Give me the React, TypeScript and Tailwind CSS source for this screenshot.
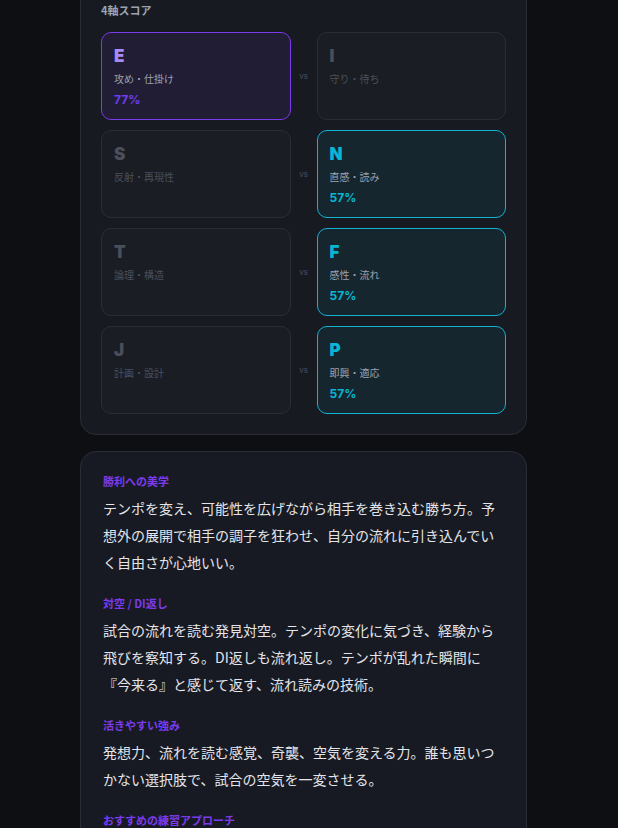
import React from "react";

type Axis = {
  letter: string;
  label: string;
  pct?: string;
  tone?: "purple" | "cyan";
};

const rows: [Axis, Axis][] = [
  [
    { letter: "E", label: "攻め・仕掛け", pct: "77%", tone: "purple" },
    { letter: "I", label: "守り・待ち" },
  ],
  [
    { letter: "S", label: "反射・再現性" },
    { letter: "N", label: "直感・読み", pct: "57%", tone: "cyan" },
  ],
  [
    { letter: "T", label: "論理・構造" },
    { letter: "F", label: "感性・流れ", pct: "57%", tone: "cyan" },
  ],
  [
    { letter: "J", label: "計画・設計" },
    { letter: "P", label: "即興・適応", pct: "57%", tone: "cyan" },
  ],
];

function AxisCard({ a }: { a: Axis }) {
  const box =
    a.tone === "purple"
      ? "bg-[#211d35] border-[#7c3aed]"
      : a.tone === "cyan"
      ? "bg-[#15262f] border-[#0fb3d3]"
      : "bg-[#1b1d24] border-[#2a2d34]";
  const letter =
    a.tone === "purple"
      ? "text-[#a78bfa]"
      : a.tone === "cyan"
      ? "text-[#06b6d4]"
      : "text-[#4a4f5b]";
  const label = a.tone ? "text-[#9ca3af]" : "text-[#4b505b]";
  const pct = a.tone === "purple" ? "text-[#6d3df2]" : "text-[#06b6d4]";
  return (
    <div className={`rounded-[10px] border px-[12px] pt-[13px] pb-[11px] ${box}`}>
      <div
        className={`text-[17px] leading-[20px] font-black ${letter}`}
        style={{ fontFamily: "Inter, 'Noto Sans CJK JP', sans-serif" }}
      >
        {a.letter}
      </div>
      <div className={`mt-[5px] text-[10px] leading-[15px] ${label}`}>{a.label}</div>
      {a.pct && (
        <div
          className={`mt-[6px] text-[12px] leading-[16px] font-bold ${pct}`}
          style={{ fontFamily: "Inter, 'Noto Sans CJK JP', sans-serif" }}
        >
          {a.pct}
        </div>
      )}
    </div>
  );
}

const sections = [
  {
    title: "勝利への美学",
    body: "テンポを変え、可能性を広げながら相手を巻き込む勝ち方。予想外の展開で相手の調子を狂わせ、自分の流れに引き込んでいく自由さが心地いい。",
  },
  {
    title: "対空 / DI返し",
    body: "試合の流れを読む発見対空。テンポの変化に気づき、経験から飛びを察知する。DI返しも流れ返し。テンポが乱れた瞬間に『今来る』と感じて返す、流れ読みの技術。",
  },
  {
    title: "活きやすい強み",
    body: "発想力、流れを読む感覚、奇襲、空気を変える力。誰も思いつかない選択肢で、試合の空気を一変させる。",
  },
  {
    title: "おすすめの練習アプローチ",
    body: "流れの変化を意識しながら、相手の反応を観察する練習を重ねよう。",
  },
];

export default function App() {
  return (
    <div
      className="w-[618px] h-[828px] overflow-hidden bg-[#0e0f13] flex flex-col pl-[80px]"
      style={{ fontFamily: "'Noto Sans CJK JP', 'Noto Sans', sans-serif" }}
    >
      <div className="w-[447px] mt-[-19px] rounded-2xl border border-[#2a2d35] bg-[#171a21] px-5 pt-5 pb-5">
        <div className="text-[11px] leading-[16px] font-bold text-[#9ca3af]">4軸スコア</div>
        <div className="mt-[14px] grid grid-cols-[1fr_26px_1fr] gap-y-[10px]">
          {rows.map(([l, r], i) => (
            <React.Fragment key={i}>
              <AxisCard a={l} />
              <div
                className="flex items-center justify-center text-[8px] text-[#4b5060]"
                style={{ fontFamily: "Inter, sans-serif" }}
              >
                vs
              </div>
              <AxisCard a={r} />
            </React.Fragment>
          ))}
        </div>
      </div>

      <div className="w-[447px] mt-4 rounded-2xl border border-[#2a2d36] bg-[#171a22] px-[22px] pt-[21px] pb-[22px] shrink-0">
        {sections.map((s, i) => (
          <div key={i} className={i > 0 ? "mt-[19px]" : ""}>
            <div className="text-[11px] leading-[16px] font-bold text-[#7c3aed]">{s.title}</div>
            <p className="mt-[6px] text-[14px] leading-[27px] text-[#e3e5ea]">{s.body}</p>
          </div>
        ))}
      </div>
    </div>
  );
}
